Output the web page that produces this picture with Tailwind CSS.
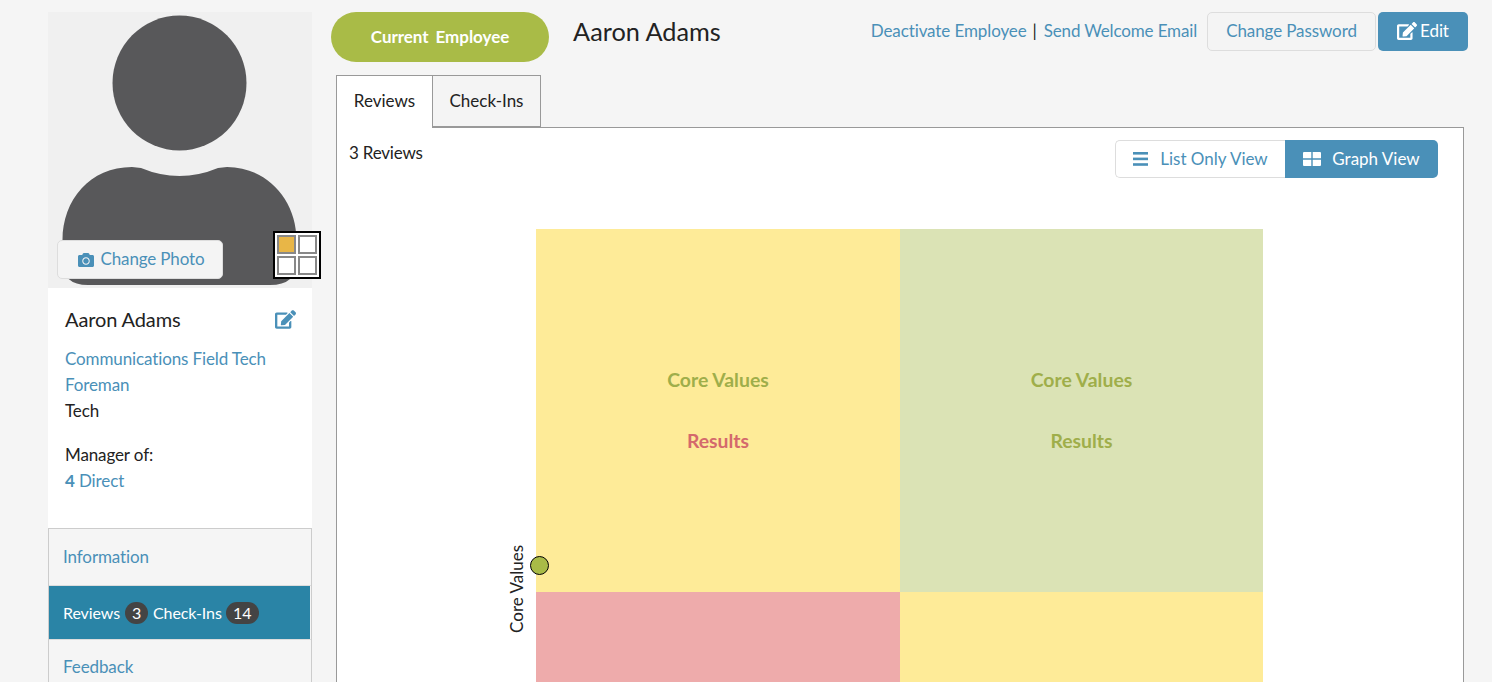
<!DOCTYPE html>
<html lang="en">
<head>
  <meta charset="UTF-8">
  <title>Aaron Adams - Reviews</title>
  <script src="https://cdn.jsdelivr.net/npm/@tailwindcss/browser@4"></script>
</head>
<body class="bg-[#f5f5f5] font-['Lato',sans-serif] text-[17px] leading-[26px] text-[#222]">
  <div class="h-[682px] overflow-hidden flex pl-[48px] pt-[12px]">

    <!-- sidebar -->
    <aside class="w-[264px] shrink-0">
      <div class="relative h-[276px] bg-[#f0f0f0]">
        <svg class="absolute inset-0" width="264" height="276" viewBox="0 0 264 276">
          <ellipse cx="131.5" cy="71" rx="67" ry="67.5" fill="#58585a"/>
          <path d="M14.5 228C14.5 188 42 155 84 155L93 156Q131.5 172 170 156L179 155C219 155 248.500 188 248.500 228L248.500 250Q248.500 273 222 273L40 273Q14.500 273 14.500 250Z" fill="#58585a"/>
        </svg>
        <a href="#" class="absolute left-[9px] top-[228px] w-[166px] h-[39px] pb-[2px] flex items-center justify-center gap-[7px] bg-[#f4f4f4] border border-[#ddd] rounded-[5px] text-[#4a90b8]">
          <svg class="ml-[2px] mt-[2px]" width="16" height="16" viewBox="0 0 512 512" fill="currentColor"><path d="M512 144v288c0 26.5-21.5 48-48 48H48c-26.5 0-48-21.5-48-48V144c0-26.5 21.5-48 48-48h88l12.3-32.9c7-18.7 24.9-31.1 44.9-31.1h125.5c20 0 37.9 12.4 44.9 31.1L376 96h88c26.5 0 48 21.5 48 48zM376 288c0-66.2-53.8-120-120-120s-120 53.8-120 120 53.8 120 120 120 120-53.8 120-120zm-32 0c0 48.5-39.5 88-88 88s-88-39.5-88-88 39.5-88 88-88 88 39.5 88 88z"/></svg>
          <span class="tracking-[-0.15px]">Change Photo</span>
        </a>
        <div class="absolute left-[225px] top-[219px] w-[48px] h-[48px] grid grid-cols-2 gap-[2px] p-[2px] bg-white border-2 border-black">
          <div class="bg-[#e8b647] border-2 border-[#888]"></div>
          <div class="bg-white border-2 border-[#888]"></div>
          <div class="bg-white border-2 border-[#888]"></div>
          <div class="bg-white border-2 border-[#888]"></div>
        </div>
      </div>

      <div class="h-[240px] bg-white pl-[17px] pr-[17px] pt-[18px] tracking-[-0.12px]">
        <div class="flex items-center justify-between">
          <h2 class="text-[20px] leading-[26px] font-normal">Aaron Adams</h2>
          <svg class="mr-[-1px]" width="21" height="19" viewBox="0 0 576 512" fill="#4a90b8"><path d="M402.6 83.2l90.2 90.2c3.8 3.8 3.8 10 0 13.8L274.4 405.6l-92.8 10.3c-12.4 1.4-22.9-9.1-21.5-21.5l10.3-92.8L388.8 83.2c3.8-3.8 10-3.8 13.8 0zm162-22.9l-48.8-48.8c-15.2-15.2-39.9-15.2-55.2 0l-35.4 35.4c-3.8 3.8-3.8 10 0 13.8l90.2 90.2c3.8 3.8 10 3.8 13.8 0l35.4-35.4c15.2-15.3 15.2-40 0-55.2zM384 346.2V448H64V128h229.8c3.2 0 6.2-1.3 8.5-3.5l40-40c7.6-7.6 2.2-20.5-8.5-20.5H48C21.5 64 0 85.5 0 112v352c0 26.5 21.5 48 48 48h352c26.5 0 48-21.5 48-48V306.2c0-10.7-12.9-16-20.5-8.5l-40 40c-2.2 2.3-3.5 5.3-3.5 8.5z"/></svg>
        </div>
        <div class="mt-[14px]">
          <a href="#" class="block text-[#4a90b8]">Communications Field Tech</a>
          <a href="#" class="block text-[#4a90b8]">Foreman</a>
          <div>Tech</div>
        </div>
        <div class="mt-[18px]">
          <div>Manager of:</div>
          <a href="#" class="block text-[#4a90b8]"><b>4</b> Direct</a>
        </div>
      </div>

      <nav class="border border-[#ccc] border-b-0 tracking-[-0.1px]">
        <a href="#" class="block h-[57px] pl-[14px] pt-[15px] text-[#4a90b8] border-b border-[#ddd]">Information</a>
        <div class="h-[53px] mr-[1px] pl-[14px] flex items-center gap-[5px] bg-[#2a84a6] text-white text-[16px]">
          Reviews
          <span class="w-[23px] h-[22px] rounded-full bg-[#444] flex items-center justify-center">3</span>
          <span>Check-Ins</span>
          <span class="w-[33px] h-[22px] ml-[-1px] rounded-full bg-[#444] flex items-center justify-center">14</span>
        </div>
        <a href="#" class="block h-[57px] pl-[14px] pt-[14px] text-[#4a90b8] border-t border-[#ddd]">Feedback</a>
      </nav>
    </aside>

    <!-- main -->
    <main class="w-[1137px] ml-[19px] shrink-0">
      <div class="flex items-start h-[63px]">
        <div class="w-[218px] h-[50px] rounded-full bg-[#a9bb47] flex items-center justify-center text-white font-bold [word-spacing:3px] tracking-[-0.05px]">Current Employee</div>
        <h1 class="ml-[24px] text-[25.3px] leading-[38px] font-normal">Aaron Adams</h1>
        <div class="ml-auto flex items-start tracking-[-0.1px]">
          <div class="flex items-center h-[38px] mr-[10px]">
            <a href="#" class="text-[#4a90b8]">Deactivate Employee</a>
            <span class="ml-[6px] mr-[7px]">|</span>
            <a href="#" class="text-[#4a90b8] tracking-[-0.15px]">Send Welcome Email</a>
          </div>
          <a href="#" class="w-[169px] h-[39px] pb-[2px] flex items-center justify-center bg-[#f4f4f4] border border-[#ddd] rounded-[5px] text-[#4a90b8]">Change Password</a>
          <a href="#" class="ml-[2px] w-[90px] h-[39px] pb-[2px] flex items-center justify-center gap-[3px] bg-[#4a90b8] rounded-[5px] text-white">
            <svg width="20" height="18" viewBox="0 0 576 512" fill="currentColor"><path d="M402.6 83.2l90.2 90.2c3.8 3.8 3.8 10 0 13.8L274.4 405.6l-92.8 10.3c-12.4 1.4-22.9-9.1-21.5-21.5l10.3-92.8L388.8 83.2c3.8-3.8 10-3.8 13.8 0zm162-22.9l-48.8-48.8c-15.2-15.2-39.9-15.2-55.2 0l-35.4 35.4c-3.8 3.8-3.8 10 0 13.8l90.2 90.2c3.8 3.8 10 3.8 13.8 0l35.4-35.4c15.2-15.3 15.2-40 0-55.2zM384 346.2V448H64V128h229.8c3.2 0 6.2-1.3 8.5-3.5l40-40c7.6-7.6 2.2-20.5-8.5-20.5H48C21.5 64 0 85.5 0 112v352c0 26.5 21.5 48 48 48h352c26.5 0 48-21.5 48-48V306.2c0-10.7-12.9-16-20.5-8.5l-40 40c-2.2 2.3-3.5 5.3-3.5 8.5z"/></svg>
            Edit
          </a>
        </div>
      </div>

      <div class="flex ml-[5px] relative z-10 mb-[-1px]">
        <div class="w-[97px] h-[53px] pb-[2px] flex items-center justify-center bg-white border border-[#999] border-b-0">Reviews</div>
        <div class="w-[109px] h-[52px] ml-[-1px] flex items-center justify-center border border-[#999] bg-[#f4f4f4]">Check-Ins</div>
      </div>

      <section class="ml-[5px] w-[1128px] h-[700px] bg-white border border-[#999] pl-[12px] pr-[25px] pt-[12px]">
        <div class="flex justify-between items-start">
          <div class="leading-[26px] tracking-[-0.2px]">3 Reviews</div>
          <div class="flex h-[38px]">
            <a href="#" class="w-[170px] flex items-center justify-center gap-[12px] border border-[#ddd] border-r-0 rounded-l-[5px] text-[#4a90b8]">
              <svg width="15" height="14" viewBox="0 0 15 14" fill="currentColor"><rect y="0" width="15" height="2.600"/><rect y="5.600" width="15" height="2.600"/><rect y="11.200" width="15" height="2.600"/></svg>
              List Only View
            </a>
            <a href="#" class="w-[153px] flex items-center justify-center gap-[11px] bg-[#4a90b8] rounded-r-[5px] text-white">
              <svg width="18" height="14" viewBox="0 0 18 14" fill="currentColor"><path d="M0 1Q0 0 1 0H8.300V6.300H0ZM9.700 0H17Q18 0 18 1V6.300H9.700ZM0 7.700H8.300V14H1Q0 14 0 13ZM9.700 7.700H18V13Q18 14 17 14H9.700Z"/></svg>
              Graph View
            </a>
          </div>
        </div>

        <!-- 9-box chart -->
        <div class="relative ml-[187px] mt-[51px] w-[727px] grid grid-cols-[364px_363px] grid-rows-[363px_363px] font-bold text-[19.4px]">
          <div class="bg-[#feeb98] flex flex-col items-center pt-[138px] gap-[35px]">
            <span class="text-[#9fae4a]">Core Values</span>
            <span class="text-[#d4696c]">Results</span>
          </div>
          <div class="bg-[#dbe3b5] flex flex-col items-center pt-[138px] gap-[35px]">
            <span class="text-[#9fae4a]">Core Values</span>
            <span class="text-[#9fae4a]">Results</span>
          </div>
          <div class="bg-[#eeabab]"></div>
          <div class="bg-[#feeb98]"></div>
          <span class="absolute left-[-28px] top-[316px] [writing-mode:vertical-rl] rotate-180 font-normal text-[17px] leading-[18px] text-[#222]">Core Values</span>
          <span class="absolute left-[-6px] top-[327px] w-[19px] h-[19px] rounded-full bg-[#a9bb47] border border-black"></span>
        </div>
      </section>
    </main>
  </div>
</body>
</html>
